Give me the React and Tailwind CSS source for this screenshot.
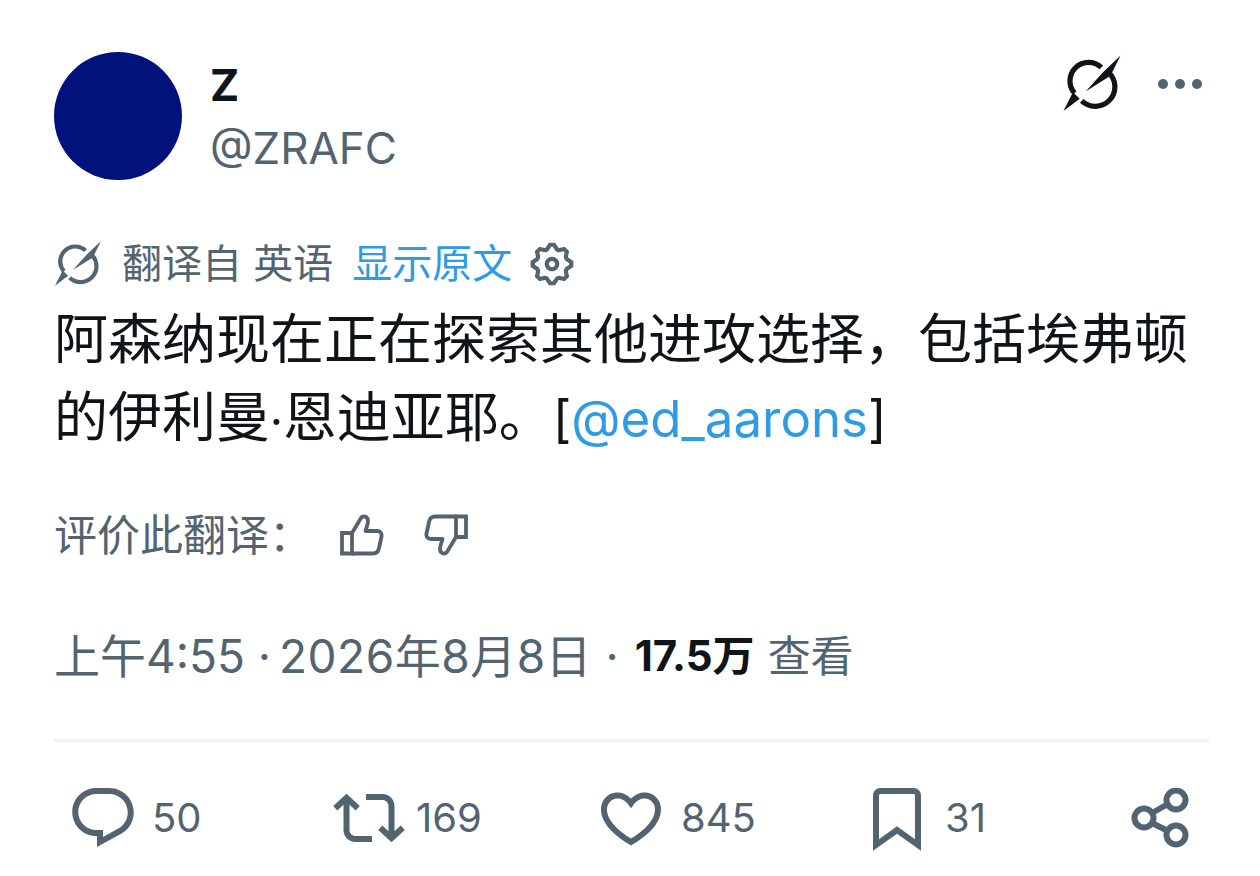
const SANS = { fontFamily: 'Inter, "Noto Sans CJK SC", sans-serif' };

function Logo({ className, color }) {
  return (
    <svg viewBox="60 40 195 190" className={className} fill="none">
      <path d="M186 84 A57 57 0 0 0 104 163" stroke={color} strokeWidth="16" />
      <path d="M126 187 A57 57 0 0 0 209 100" stroke={color} strokeWidth="16" />
      <path d="M245 48 L214 110 L138 158 L192 98 Z" fill={color} />
      <path d="M70 218 L99 160 L120 180 Z" fill={color} />
    </svg>
  );
}

function Gear() {
  return (
    <svg viewBox="0 0 24 24" className="h-[50px] w-[50px]" fill="#536471">
      <path d="M10.54 1.75h2.92l1.57 2.36c.11.17.32.25.53.21l2.53-.59 2.17 2.17-.58 2.54c-.05.2.04.41.21.53l2.36 1.57v2.92l-2.36 1.57c-.17.12-.26.33-.21.53l.58 2.54-2.17 2.17-2.53-.59c-.21-.04-.42.04-.53.21l-1.57 2.36h-2.92l-1.58-2.36c-.11-.17-.32-.25-.52-.21l-2.54.59-2.17-2.17.58-2.54c.05-.2-.03-.41-.21-.53l-2.35-1.57v-2.92L4.1 8.97c.18-.12.26-.33.21-.53L3.73 5.9 5.9 3.73l2.54.59c.2.04.41-.04.52-.21l1.58-2.36zm1.07 2l-.98 1.47C10.05 6.08 9 6.5 7.99 6.27l-1.46-.34-.6.6.33 1.46c.24 1.01-.18 2.07-1.05 2.64l-1.46.98v.78l1.46.98c.87.57 1.29 1.63 1.05 2.64l-.33 1.46.6.6 1.46-.34c1.01-.23 2.06.19 2.64 1.05l.98 1.47h.78l.97-1.47c.58-.86 1.63-1.28 2.65-1.05l1.45.34.61-.6-.34-1.46c-.23-1.01.18-2.07 1.05-2.64l1.47-.98v-.78l-1.47-.98c-.87-.57-1.28-1.63-1.05-2.64l.34-1.46-.61-.6-1.45.34c-1.02.23-2.07-.19-2.65-1.05l-.97-1.47h-.78zM12 10.5c-.83 0-1.5.67-1.5 1.5s.67 1.5 1.5 1.5c.82 0 1.5-.67 1.5-1.5s-.68-1.5-1.5-1.5zM8.5 12c0-1.93 1.56-3.5 3.5-3.5 1.93 0 3.5 1.57 3.5 3.5s-1.57 3.5-3.5 3.5c-1.94 0-3.5-1.57-3.5-3.5z" />
    </svg>
  );
}

function Thumb({ className }) {
  return (
    <svg viewBox="0 0 44 42" className={className} fill="none" stroke="#536471" strokeWidth="3.8" strokeLinejoin="round" strokeLinecap="round">
      <path d="M2 19 H12 V39.5 H2 Z" strokeLinejoin="miter" />
      <path d="M12 19 L21 4 C22.5 1.5 28 2 28 7 C28 10 26.5 13 25.5 17 H37 C40.5 17 42 19.5 41.5 22.5 L39 34 C38.3 37.5 36 39.5 33 39.5 H12" />
    </svg>
  );
}

function Action({ path, count, iconClass = '' }) {
  return (
    <div className="flex items-center">
      <svg viewBox="0 0 24 24" className={`h-[72px] w-[72px] shrink-0 ${iconClass}`} fill="#536471">
        <path d={path} />
      </svg>
      <span className="text-[40px] leading-[72px] text-[#536471]">{count}</span>
    </div>
  );
}

export default function App() {
  return (
    <div className="h-[876px] w-[1260px] overflow-hidden bg-white px-[54px] pt-[52px]" style={SANS}>
      <header className="flex h-[128px] items-start">
        <div className="h-[128px] w-[128px] shrink-0 rounded-full bg-[#02127d]" />
        <div className="ml-[28px] flex-1">
          <div className="mt-[8px] text-[44px] font-bold leading-[50px] text-[#0f1419]">Z</div>
          <div className="mt-[13px] text-[44px] leading-[50px] text-[#536471]">@ZRAFC</div>
        </div>
        <Logo className="mr-[-3px] mt-[1px] h-[62px] w-[64px]" color="#0f1419" />
        <div className="ml-[37px] mr-[4px] mt-[27px] flex gap-[7px]">
          <span className="h-[10px] w-[10px] rounded-full bg-[#536471]" />
          <span className="h-[10px] w-[10px] rounded-full bg-[#536471]" />
          <span className="h-[10px] w-[10px] rounded-full bg-[#536471]" />
        </div>
      </header>

      <div className="mt-[58px] flex h-[52px] items-center">
        <Logo className="ml-[-2px] h-[50px] w-[52px]" color="#536471" />
        <span className="ml-[18px] text-[40px] leading-[52px] text-[#536471]">翻译自 英语</span>
        <span className="ml-[19px] text-[40px] leading-[52px] text-[#2f9be4]">显示原文</span>
        <span className="ml-[15px] flex"><Gear /></span>
      </div>

      <p className="mt-[11px] w-[1150px] text-[54px] leading-[78px] text-[#0f1419]">
        阿森纳现在正在探索其他进攻选择，包括埃弗顿的伊利曼<span className="text-[44px] leading-none">·</span>恩迪亚耶。<span className="text-[51px] leading-none">[<span className="text-[#2f9be4]">@ed_aarons</span>]</span>
      </p>

      <div className="mt-[53px] flex h-[50px] items-center">
        <span className="w-[286px] text-[43px] leading-[50px] text-[#536471]">评价此翻译：</span>
        <Thumb className="h-[42px] w-[44px]" />
        <Thumb className="ml-[40px] h-[42px] w-[44px] rotate-180" />
      </div>

      <div className="mt-[66px] flex h-[60px] items-center text-[46px] leading-[60px] text-[#536471]">
        <span className="whitespace-pre">上午4:55 · </span>
        <span className="ml-[-5px] whitespace-pre tracking-[0.5px]">2026年8月8日 · </span>
        <span className="ml-[2px] text-[42px] font-bold text-[#0f1419]">17.5万</span>
        <span className="ml-[13px] text-[43px]">查看</span>
      </div>

      <div className="mt-[53px] h-[3px] w-[1155px] bg-[#eff3f4]" />

      <div className="mt-[40px] grid grid-cols-[266px_262px_266px_265px_auto] pl-[13px]">
        <Action count="50" iconClass="mr-[13px]" path="M1.751 10c0-4.42 3.584-8 8.005-8h4.366c4.49 0 8.129 3.64 8.129 8.13 0 2.96-1.607 5.68-4.196 7.11l-8.054 4.46v-3.69h-.067c-4.49.1-8.183-3.51-8.183-8.01zm8.005-6c-3.317 0-6.005 2.69-6.005 6 0 3.37 2.77 6.08 6.138 6.01l.351-.01h1.761v2.3l5.087-2.81c1.951-1.08 3.163-3.13 3.163-5.36 0-3.39-2.744-6.13-6.129-6.13H9.756z" />
        <Action count="169" iconClass="mr-[11px]" path="M4.5 3.88l4.432 4.14-1.364 1.46L5.5 7.55V16c0 1.1.896 2 2 2H13v2H7.5c-2.209 0-4-1.79-4-4V7.55L1.432 9.48.068 8.02 4.5 3.88zM16.5 6H11V4h5.5c2.209 0 4 1.79 4 4v8.45l2.068-1.93 1.364 1.46-4.432 4.14-4.432-4.14 1.364-1.46 2.068 1.93V8c0-1.1-.896-2-2-2z" />
        <Action count="845" iconClass="mr-[14px]" path="M16.697 5.5c-1.222-.06-2.679.51-3.89 2.16l-.805 1.09-.806-1.09C9.984 6.01 8.526 5.44 7.304 5.5c-1.243.07-2.349.78-2.91 1.91-.552 1.12-.633 2.78.479 4.82 1.074 1.97 3.257 4.27 7.129 6.61 3.87-2.34 6.052-4.64 7.126-6.61 1.111-2.04 1.03-3.7.477-4.82-.561-1.13-1.666-1.84-2.908-1.91zm4.187 7.69c-1.351 2.48-4.001 5.12-8.379 7.67l-.503.3-.504-.3c-4.379-2.55-7.029-5.19-8.382-7.67-1.36-2.5-1.41-4.86-.514-6.67.887-1.79 2.647-2.91 4.601-3.01 1.651-.09 3.368.56 4.798 2.01 1.429-1.45 3.146-2.1 4.796-2.01 1.954.1 3.714 1.22 4.601 3.01.896 1.81.846 4.17-.514 6.67z" />
        <Action count="31" iconClass="mr-[12px]" path="M4 4.5C4 3.12 5.12 2 6.5 2h11C18.88 2 20 3.12 20 4.5v18.44l-8-5.71-8 5.71V4.5zM6.5 4c-.28 0-.5.22-.5.5v14.56l6-4.29 6 4.29V4.5c0-.28-.22-.5-.5-.5h-11z" />
        <svg viewBox="0 0 58 60" className="ml-[5px] h-[60px] w-[58px] self-center" fill="none" stroke="#536471" strokeWidth="6">
          <circle cx="13" cy="30" r="9.5" />
          <circle cx="45" cy="12" r="9.5" />
          <circle cx="45" cy="47" r="9.5" />
          <path d="M21 25 L37 16 M21 35 L37 43" />
        </svg>
      </div>
    </div>
  );
}
